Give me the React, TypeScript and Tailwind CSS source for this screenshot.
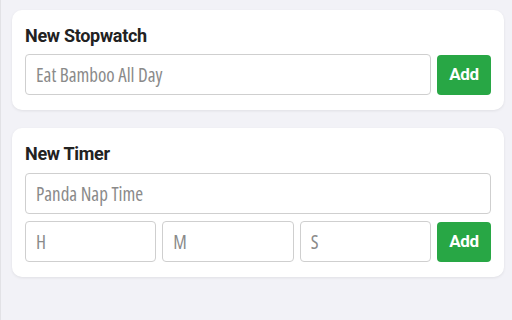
import React from "react";

const inputClass =
  "h-[41px] w-full min-w-0 rounded-[4px] border border-[#cfcfcf] bg-white px-[10px] font-['Open_Sans',sans-serif] text-[19px] font-stretch-condensed text-[#333] placeholder:text-[#8a8a8a] focus:outline-none";

const AddButton: React.FC = () => (
  <button className="h-[40px] w-[54px] shrink-0 rounded-[4px] bg-[#28a745] text-[17px] font-bold tracking-[-0.3px] text-white">
    Add
  </button>
);

const App: React.FC = () => {
  return (
    <div className="min-h-[320px] w-[512px] border-l border-[#e2e2e6] bg-[#f2f2f7] pl-[11px] pr-[8px] pt-[10px] font-['Roboto','Liberation_Sans',sans-serif]">
      <div className="rounded-[10px] bg-white px-[13px] py-[15px] shadow-[0_1px_3px_rgba(0,0,0,0.08)]">
        <h2 className="mb-[8px] text-[18px] font-bold leading-[21px] tracking-[-0.3px] text-[#222]">New Stopwatch</h2>
        <div className="flex items-center gap-1.5">
          <input className={inputClass} placeholder="Eat Bamboo All Day" />
          <AddButton />
        </div>
      </div>

      <div className="mt-[18px] rounded-[10px] bg-white px-[13px] py-[15px] shadow-[0_1px_3px_rgba(0,0,0,0.08)]">
        <h2 className="mb-[9px] text-[18px] font-bold leading-[21px] tracking-[-0.3px] text-[#222]">New Timer</h2>
        <input className={inputClass} placeholder="Panda Nap Time" />
        <div className="mt-[7px] flex items-center gap-1.5">
          <input className={inputClass} placeholder="H" />
          <input className={inputClass} placeholder="M" />
          <input className={inputClass} placeholder="S" />
          <AddButton />
        </div>
      </div>
    </div>
  );
};

export default App;
